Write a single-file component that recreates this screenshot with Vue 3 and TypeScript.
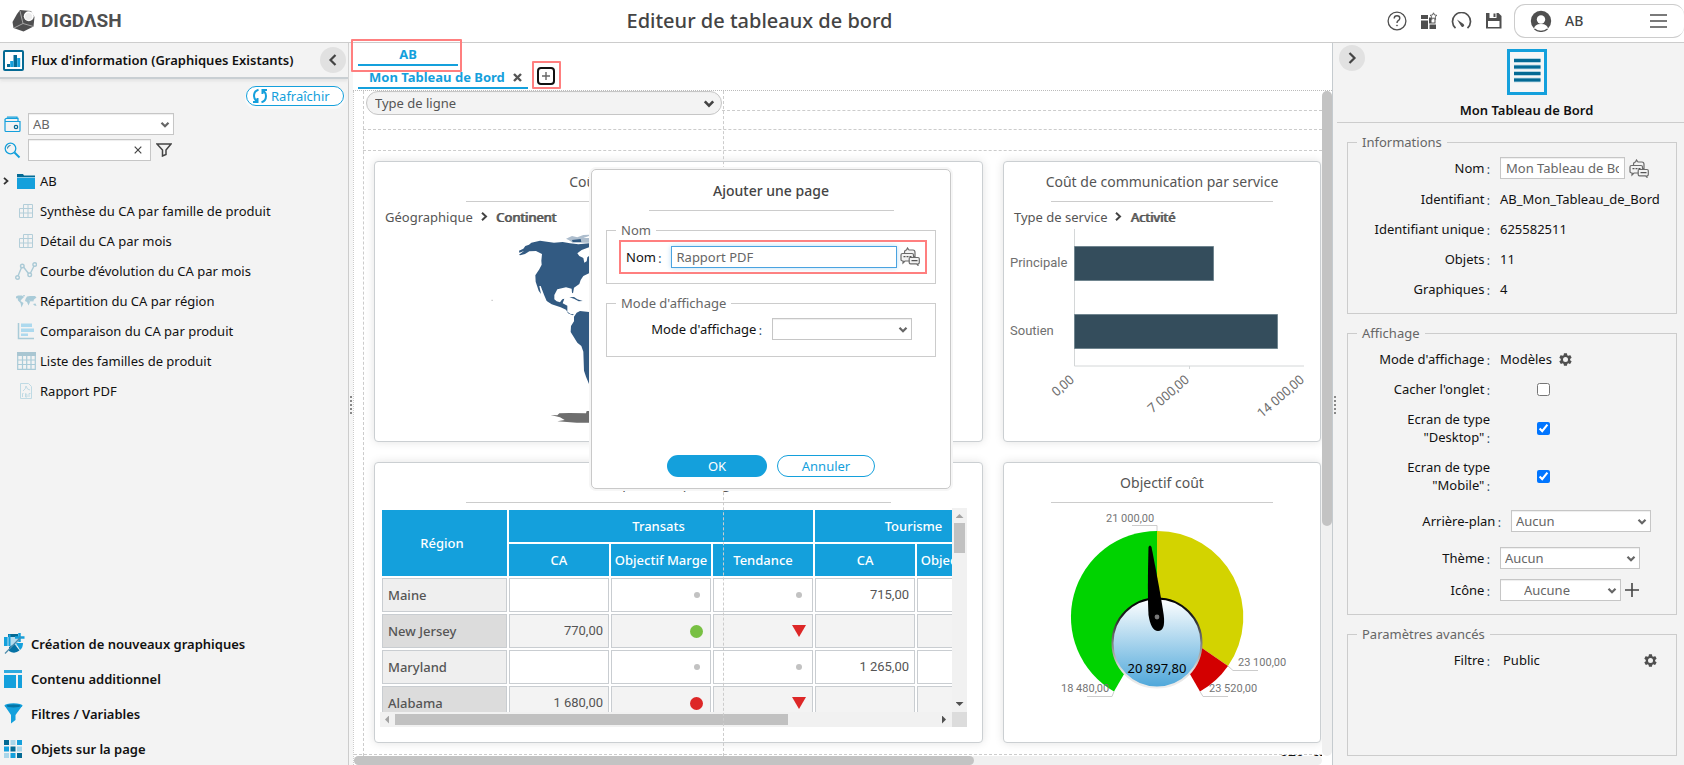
<script setup lang="ts">
import { ref } from 'vue'

interface FluxItem { label: string; icon: string }
interface Cell { kind: 'text' | 'none' | 'dot' | 'green' | 'red' | 'down'; value?: string }
interface Row { region: string; cells: Cell[] }

const fluxItems: FluxItem[] = [
  { label: 'Synthèse du CA par famille de produit', icon: 'cross' },
  { label: 'Détail du CA par mois', icon: 'cross' },
  { label: 'Courbe d’évolution du CA par mois', icon: 'line' },
  { label: 'Répartition du CA par région', icon: 'map' },
  { label: 'Comparaison du CA par produit', icon: 'bars' },
  { label: 'Liste des familles de produit', icon: 'table' },
  { label: 'Rapport PDF', icon: 'pdf' },
]

const sections = [
  { label: 'Création de nouveaux graphiques', icon: 'create' },
  { label: 'Contenu additionnel', icon: 'content' },
  { label: 'Filtres / Variables', icon: 'filter' },
  { label: 'Objets sur la page', icon: 'objects' },
]

const none: Cell = { kind: 'none' }
const dot: Cell = { kind: 'dot' }
const down: Cell = { kind: 'down' }
const num = (value: string): Cell => ({ kind: 'text', value })
const rows: Row[] = [
  { region: 'Maine', cells: [none, dot, dot, num('715,00'), none] },
  { region: 'New Jersey', cells: [num('770,00'), { kind: 'green' }, down, none, none] },
  { region: 'Maryland', cells: [none, dot, dot, num('1 265,00'), none] },
  { region: 'Alabama', cells: [num('1 680,00'), { kind: 'red' }, down, none, none] },
]

const infos = [
  { label: 'Identifiant', value: 'AB_Mon_Tableau_de_Bord' },
  { label: 'Identifiant unique', value: '625582511' },
  { label: 'Objets', value: '11' },
  { label: 'Graphiques', value: '4' },
]

const pageName = ref('Rapport PDF')
const boardName = ref('Mon Tableau de Bord')
const search = ref('')
const hidden = ref(false)
const desktop = ref(true)
const mobile = ref(true)
</script>

<template>
  <div class="app">
    <svg class="defs" aria-hidden="true">
      <symbol id="gear" viewBox="0 0 24 24">
        <path fill="currentColor" d="M19.4 13a7.6 7.6 0 0 0 0-2l2.200-1.700a.5.5 0 0 0 .1-.6l-2-3.500a.5.500 0 0 0-.6-.2l-2.600 1a7.300 7.300 0 0 0-1.700-1l-.4-2.600a.5.500 0 0 0-.5-.4h-4a.5.500 0 0 0-.5.4L9 5a7.300 7.300 0 0 0-1.700 1l-2.500-1a.5.500 0 0 0-.6.200l-2 3.500a.5.500 0 0 0 .1.600L4.500 11a7.600 7.600 0 0 0 0 2l-2.200 1.700a.5.500 0 0 0-.1.600l2 3.500c.1.200.4.300.6.200l2.500-1c.5.400 1.100.8 1.700 1l.4 2.600c0 .2.300.4.500.4h4c.3 0 .5-.2.500-.4l.4-2.600a7.300 7.300 0 0 0 1.700-1l2.600 1c.2.100.5 0 .6-.2l2-3.500a.5.500 0 0 0-.1-.6zM12 16a4 4 0 1 1 0-8 4 4 0 0 1 0 8z" />
      </symbol>
      <symbol id="chevron" viewBox="0 0 10 8">
        <path d="M1.500 1.800 5 5.300 8.500 1.800" fill="none" stroke="currentColor" stroke-width="2.200" />
      </symbol>
      <symbol id="translate" viewBox="0 0 20 19">
        <g fill="#f3f3f3" stroke="#6b6b6b" stroke-width="1.200">
          <path d="M4.500 5.500q0-2.500 2-2.500L7.500 1l1.500 2h4q2 0 2 2.500v4h-10z" />
          <path d="M2.500 6.500h9.500q1.500 0 1.500 1.500v4.500q0 1.500-1.500 1.500H5L3 16v-2q-2 0-2-1.500V8q0-1.500 1.500-1.500z" />
          <path d="M10 10.500h8q1.300 0 1.300 1.300v3.700q0 1.300-1.300 1.300v1.500l-1.500-1.500H10.500q-1.300 0-1.300-1.300v-3.700q0-1.300.8-1.300z" />
        </g>
        <path d="M3.500 9.700h2m1 0h2m1 0h2M11.500 13.700h6" stroke="#555" stroke-width="1.300" />
      </symbol>
    </svg>

    <header class="topbar">
      <a class="logo" href="#" aria-label="DIGDASH">
        <svg width="23" height="23" viewBox="0 0 23 23">
          <path d="M8 1 19 2 22.500 8 21.500 17.500 11.500 22.500 1.500 19 .5 13 5 5z" fill="#4f4f50" />
          <path d="M11 14.500 2 19M11 14.500 21.500 17.500M11 14.500 8 2" stroke="#b9b9b9" stroke-width=".8" fill="none" />
          <circle cx="16.800" cy="7.300" r="5" fill="#fff" />
          <circle cx="16.500" cy="7.500" r="3.600" fill="#ececec" />
        </svg>
        <span>DIGDΛSH</span>
      </a>
      <h1>Editeur de tableaux de bord</h1>
      <nav class="tools">
        <button aria-label="Aide">
          <svg width="20" height="20" viewBox="0 0 20 20" fill="none" stroke="#4f4f4f">
            <circle cx="10" cy="10" r="8.900" stroke-width="1.300" />
            <path d="M7.200 7.500q0-2.700 2.800-2.700t2.800 2.500q0 1.500-1.600 2.400-1.200.8-1.200 2.300" stroke-width="1.400" />
            <circle cx="10" cy="14.500" r=".6" fill="#4f4f4f" stroke-width=".6" />
          </svg>
        </button>
        <button aria-label="Tableaux">
          <svg width="18" height="18" viewBox="0 0 18 18" fill="#4f4f4f">
            <path d="M1 3h7v4H1zM1 8.500h7V17H1zM9.500 12.500H16V17H9.500zM9.500 6h2v5h-2z" />
            <rect x="9.500" y="6" width="5.500" height="5" fill="none" stroke="#4f4f4f" />
            <path d="m13.500.8 1 2.200 2.400.3-1.800 1.700.5 2.400-2.100-1.200-2.100 1.200.5-2.400L10.100 3.300l2.400-.3z" fill="#fff" stroke="#4f4f4f" stroke-width=".9" />
          </svg>
        </button>
        <button aria-label="Performances">
          <svg width="21" height="18" viewBox="0 0 21 18" fill="none" stroke="#4f4f4f">
            <path d="M4.500 16.200A9 9 0 1 1 16.500 16.200" stroke-width="1.700" />
            <path d="m6 7.500 6.500 4.500a1.600 1.600 0 1 1-2.400 2z" fill="#4f4f4f" stroke="none" />
          </svg>
        </button>
        <button aria-label="Enregistrer">
          <svg width="17" height="17" viewBox="0 0 17 17">
            <path d="M1 1h12.500L16.500 4v12.500H1z" fill="#4f4f4f" />
            <path d="M4.500 1h7v5h-7zM3 9h11.500v6H3z" fill="#fff" />
            <path d="M8.500 1.500h2V5h-2z" fill="#4f4f4f" />
          </svg>
        </button>
      </nav>
      <div class="user">
        <svg width="22" height="22" viewBox="0 0 22 22">
          <circle cx="11" cy="11" r="10.200" fill="#4f4f4f" />
          <circle cx="11" cy="9.500" r="4.200" fill="#fff" />
          <path d="M4 19.500q0-5.500 7-5.500t7 5.500q-7 3-14 0z" fill="#fff" />
          <path d="M4.500 19a10.200 10.200 0 0 0 13 0" fill="none" stroke="#4f4f4f" stroke-width="1.400" />
        </svg>
        <span>AB</span>
        <button aria-label="Menu">
          <svg width="17" height="14" viewBox="0 0 17 14" stroke="#4f4f4f" stroke-width="1.500"><path d="M0 1h17M0 7h17M0 13h17" /></svg>
        </button>
      </div>
    </header>

    <main class="body">
      <aside class="left">
        <div class="panel-head">
          <svg width="21" height="21" viewBox="0 0 21 21">
            <rect x="1" y="1" width="19" height="19" rx="1" fill="#fff" stroke="#046a94" stroke-width="2" />
            <path d="M4 14h3v3H4zM10.500 5h3.500v12h-3.500z" fill="#046a94" />
            <path d="M7.200 11h3.300v6H7.200zM14.200 8h3v9h-3z" fill="#14a0dc" />
          </svg>
          <h2>Flux d'information (Graphiques Existants)</h2>
          <button class="round" aria-label="Réduire">
            <svg width="12" height="14" viewBox="0 0 12 14"><path d="M8.500 2 3.500 7l5 5" fill="none" stroke="#444" stroke-width="2.200" /></svg>
          </button>
        </div>

        <div class="refresh-row">
          <button class="refresh">
            <svg width="16" height="16" viewBox="0 0 16 16" fill="none" stroke="#14a0dc" stroke-width="2">
              <path d="M6.500 1.800Q2 3 2 8q0 3 2.500 5.300M1 14h4.500V10M9.500 14.200Q14 13 14 8q0-3-2.500-5.300M15 2h-4.500v4" />
            </svg>
            <span>Rafraîchir</span>
          </button>
        </div>

        <div class="tool-row">
          <svg width="17" height="17" viewBox="0 0 17 17" fill="none" stroke="#14a0dc" stroke-width="1.200">
            <path d="M1 3v11.500q0 1 1 1h13q1 0 1-1V5.500H2.500Q1 5.500 1 4t1.500-1.700H14V5M3 1h10v1.500" />
            <circle cx="12" cy="11" r="1.700" stroke="#046a94" />
          </svg>
          <label class="select wallet">
            <select aria-label="Portefeuille"><option>AB</option></select>
            <svg width="10" height="8"><use href="#chevron" /></svg>
          </label>
        </div>
        <div class="tool-row">
          <svg width="17" height="17" viewBox="0 0 17 17" fill="none" stroke="#14a0dc">
            <circle cx="6.500" cy="6.500" r="5.300" stroke-width="1.300" />
            <path d="M3.500 6.500q0-3 3-3" stroke="#046a94" />
            <path d="m10.500 10.500 5 5" stroke-width="1.900" />
          </svg>
          <div class="search">
            <input v-model="search" type="text" aria-label="Rechercher" />
            <button aria-label="Effacer">
              <svg width="8" height="8" viewBox="0 0 8 8"><path d="m.7.7 6.600 6.600M7.300.7.7 7.300" stroke="#444" stroke-width="1.200" /></svg>
            </button>
          </div>
          <button aria-label="Filtrer" class="funnel">
            <svg width="16" height="14" viewBox="0 0 16 14"><path d="M1 1h14L10 7v4.500L6.500 13V7z" fill="none" stroke="#444" stroke-width="1.500" /></svg>
          </button>
        </div>

        <ul class="tree">
          <li class="folder">
            <svg class="arrow" width="6" height="8" viewBox="0 0 6 8"><path d="m1 .8 3.500 3.200L1 7.200" fill="none" stroke="#333" stroke-width="1.800" /></svg>
            <svg class="ico" width="18" height="15" viewBox="0 0 18 15"><path d="M0 0h6l1 1.500h11V4H0z" fill="#046a94" /><path d="M0 4h18v11H0z" fill="#14a0dc" /><path d="M0 3.500h18" stroke="#8fcbe6" /></svg>
            <span>AB</span>
          </li>
          <li v-for="item in fluxItems" :key="item.label">
            <svg v-if="item.icon === 'cross'" class="ico" width="16" height="16" viewBox="0 0 16 16" fill="none" stroke="#b3ced9"><path d="M5.500 1.500h9v13h-13v-9h13M1.500 10h13M5.500 1.500v13M10 1.500v13" /></svg>
            <svg v-else-if="item.icon === 'line'" class="ico" width="22" height="18" viewBox="0 0 22 18" fill="none" stroke="#abcad6" stroke-width="1.400"><path d="M3 14 6.500 5.500M8.500 5 13.500 11.500M15.500 11 19 4" /><circle cx="2.500" cy="15.500" r="1.800" /><circle cx="7.300" cy="4" r="1.800" /><circle cx="14.700" cy="12.800" r="1.800" /><circle cx="19.700" cy="2.500" r="1.800" /></svg>
            <svg v-else-if="item.icon === 'map'" class="ico" width="21" height="13" viewBox="0 0 21 13" fill="#a9cbd8"><path d="M0 1.500 2 .5h4L8 2 5.500 4.500 4.500 6l3 2-2 4.500L4.500 8 2 5.500 1.500 3 0 3.500zM7 0h2L8 2zM9.500 4 11 1.500 14 1h5l1.500 1.500L18 4.500 17 7l-1-1.500-1 1.500-1.500-2L14 7l-1.500 3.500L11 7 9 6zM17 9l2.500-.5L20.500 11l-2-.5z" /></svg>
            <svg v-else-if="item.icon === 'bars'" class="ico" width="18" height="17" viewBox="0 0 18 17"><path d="M1.500 0v15.500H17" fill="none" stroke="#a9cbd8" stroke-width="1.500" /><path d="M4 .5h11V4H4zM4 5.500h13V9H4zM4 10.500h7V13H4z" fill="#add9ee" /></svg>
            <svg v-else-if="item.icon === 'table'" class="ico" width="19" height="18" viewBox="0 0 19 18"><path d="M.7 4v13.300h17.600V4M.7 8h17.600M.7 12.500h17.600M5.500 4v13M9.700 4v13M14 4v13" fill="none" stroke="#a9cbd8" stroke-width="1.200" /><path d="M0 0h19v4H0z" fill="#a9c6d2" /></svg>
            <svg v-else class="ico" width="12" height="16" viewBox="0 0 12 16" fill="none" stroke="#bfdae4"><path d="M.5.5h8l3 3v12H.5zM3 8q3-2 3-5 1 4 4 4M2.500 14v-3.500h1M5.500 14v-3.500q2 0 1.500 3.500zM9 14v-3.500h1.500" /></svg>
            <span>{{ item.label }}</span>
          </li>
        </ul>

        <ul class="sections">
          <li v-for="s in sections" :key="s.label">
            <span class="sec-ico">
              <svg v-if="s.icon === 'create'" width="21" height="21" viewBox="0 0 21 21"><path d="M4 1h10v4H4z" fill="#046a94" /><path d="M0 4h14v9H0z" fill="#b5dcee" /><path d="M0 4h3.500v9H0zM4.500 1.500h2V13h-2z" fill="#14a0dc" /><path d="M5 14 10.500 11l5 6.500q-5 4-10.500.5z" fill="#0572a5" /><path d="M12 10h7q0 5-3 7z" fill="#14a0dc" /><path d="M15.500 0v9M11 4.500h9.500" stroke="#14a0dc" stroke-width="2.500" /><path d="M1 20.500 17 4" stroke="#4d8bab" stroke-width="1.200" /></svg>
              <svg v-else-if="s.icon === 'content'" width="18" height="18" viewBox="0 0 18 18"><path d="M0 0h18v3H0z" fill="#2eaadf" /><path d="M0 5h12v13H0zM14 5h4v13h-4z" fill="#14a0dc" /></svg>
              <svg v-else-if="s.icon === 'filter'" width="19" height="21" viewBox="0 0 19 21"><path d="M.5 2.500 7 12v8.500l4.500-3.500v-5l7-9.500z" fill="#14a0dc" /><ellipse cx="9.500" cy="2.700" rx="9" ry="2.500" fill="#14a0dc" /><ellipse cx="9.500" cy="2.900" rx="7" ry="1.500" fill="#0574a5" /></svg>
              <svg v-else width="18" height="18" viewBox="0 0 18 18"><path d="M0 0h5v5H0zM6.500 6.500h5v5h-5zM13 13h5v5h-5z" fill="#046a94" /><path d="M13 0h5v5h-5zM0 6.500h5v5H0zM6.500 13h5v5h-5z" fill="#14a0dc" /><path d="M6.500 0h5v5h-5zM13 6.500h5v5h-5zM0 13h5v5H0z" fill="#a9d6ea" /></svg>
            </span>
            <span>{{ s.label }}</span>
          </li>
        </ul>
      </aside>
      <div class="splitter"><i /><i /><i /><i /><i /></div>

      <section class="center">
        <div class="tabs first">
          <button class="tab main">AB</button>
          <span class="mark mark-tab" />
        </div>
        <div class="tabs second">
          <div class="tab page">
            <button>Mon Tableau de Bord</button>
            <button aria-label="Fermer" class="close"><svg width="9" height="9" viewBox="0 0 9 9"><path d="m1 1 7 7M8 1 1 8" stroke="#555" stroke-width="2.400" /></svg></button>
          </div>
          <button class="add" aria-label="Ajouter une page"><svg width="8" height="8" viewBox="0 0 8 8"><path d="M4 0v8M0 4h8" stroke="#666" stroke-width="1.400" /></svg><span class="mark mark-add" /></button>
        </div>

        <div class="viewport">
          <div class="canvas">
            <label class="select type">
              <select aria-label="Type de ligne"><option>Type de ligne</option></select>
              <svg width="12" height="10"><use href="#chevron" /></svg>
            </label>
            <div class="cards">
              <article class="card">
                <h3>Coût de communication par zone</h3>
                <p class="crumb">Géographique <svg width="7" height="9" viewBox="0 0 7 9"><path d="m1 .8 4 3.700-4 3.700" fill="none" stroke="#444" stroke-width="2" /></svg> <b>Continent</b></p>
                <svg class="chart" viewBox="15 27 1821 630">
                  <g fill="#325a82">
                    <path d="M447 92 460 86 466 78 477 74 484 68 510 62 552 68 578 66 600 70 625 73 657 70V82L635 90 622 100 628 108 640 114 643 128 650 124 652 112 657 108V160L640 168 632 180 628 192 612 203 609 220 606 218 605 206 588 202 562 208 553 225 553 238 560 244 570 247 577 238 583 236 578 250 592 257 592 275 602 282 612 283 608 286 594 280 588 269 572 262 545 253 530 243 522 224 512 198 508 198 513 222 506 212 497 185 496 166 508 148 515 134 514 122 516 102 498 93 478 94 465 102 450 106 447 104 462 93 448 98z" />
                    <path d="M612 290 620 278 630 273 657 276V492L648 470 642 452 640 395 634 378 622 368 602 336 603 318 612 304z" />
                    <path d="M588 56 606 48 622 52 640 45 657 44V48L640 54 657 54V68L608 68 596 60z" opacity=".4" />
                    <path d="M606 60 632 57 634 66 608 66zM598 232 612 231 622 238 638 243 626 244 612 236z" />
                  </g>
                  <path d="M542 585 562 586 568 580 598 579 648 580 650 573H657V608H620L562 604 584 600 570 592z" fill="#6e6e6e" />
                  <path d="M364 241h5" stroke="#aaa" stroke-width="2" />
                </svg>
              </article>

              <article class="card">
                <h3>Coût de communication par service</h3>
                <p class="crumb">Type de service <svg width="7" height="9" viewBox="0 0 7 9"><path d="m1 .8 4 3.700-4 3.700" fill="none" stroke="#444" stroke-width="2" /></svg> <b>Activité</b></p>
                <svg class="chart roboto" viewBox="0 0 316 210">
                  <path d="M70.500 0v137H300M185.500 137v3" fill="none" stroke="#d4d7d8" />
                  <g fill="#344d5c" stroke="#70858f"><path d="M70.500 17.500h139v34h-139zM70.500 85.500h203v34h-203z" /></g>
                  <g font-size="13" fill="#707070">
                    <text x="6" y="38">Principale</text>
                    <text x="6" y="106">Soutien</text>
                    <g text-anchor="end">
                      <text transform="translate(71 152) rotate(-41)">0,00</text>
                      <text transform="translate(186 152) rotate(-41)">7 000,00</text>
                      <text transform="translate(301 152) rotate(-41)">14 000,00</text>
                    </g>
                  </g>
                </svg>
              </article>

              <article class="card">
                <h3>Répartition par région</h3>
                <div class="grid-box">
                  <div class="grid-clip">
                    <table>
                      <colgroup><col class="c-region" /><col v-for="n in 5" :key="n" class="c-num" /></colgroup>
                      <thead>
                        <tr class="groups"><th rowspan="2">Région</th><th colspan="3">Transats</th><th colspan="2">Tourisme</th></tr>
                        <tr><th>CA</th><th>Objectif Marge</th><th>Tendance</th><th>CA</th><th>Objectif Marge</th></tr>
                      </thead>
                      <tbody>
                        <tr v-for="row in rows" :key="row.region">
                          <th scope="row">{{ row.region }}</th>
                          <td v-for="(cell, i) in row.cells" :key="i">
                            <template v-if="cell.kind === 'text'">{{ cell.value }}</template>
                            <i v-else-if="cell.kind !== 'none'" :class="cell.kind" />
                          </td>
                        </tr>
                      </tbody>
                    </table>
                  </div>
                  <div class="vbar"><i class="tri up" /><span /><i class="tri dn" /></div>
                  <div class="hbar"><i class="tri lt" /><span /><i class="tri rt" /></div>
                  <div class="corner" />
                </div>
              </article>

              <article class="card">
                <h3>Objectif coût</h3>
                <svg class="chart roboto" viewBox="0 0 316 236">
                  <defs>
                    <linearGradient id="dial" x1="0" y1="0" x2="0" y2="1"><stop offset="0" stop-color="#fff" /><stop offset="1" stop-color="#4ea7da" /></linearGradient>
                    <linearGradient id="ring" x1="0" y1="0" x2="0" y2="1"><stop offset="0" stop-color="#000" /><stop offset=".2" stop-color="#222" /><stop offset=".8" stop-color="#ddd" /><stop offset="1" stop-color="#eee" /></linearGradient>
                  </defs>
                  <path d="M153 114 110 188.500A86 86 0 0 1 153 28z" fill="#00d300" />
                  <path d="M153 114V28A86 86 0 0 1 224 163z" fill="#d3d300" />
                  <path d="M153 114 224 163A86 86 0 0 1 196 188.500z" fill="#d30000" />
                  <circle cx="153" cy="140" r="44.500" fill="url(#dial)" stroke="url(#ring)" stroke-width="2" />
                  <path d="M144.500 44q1.500-3 3 0 9 46 12.200 68 2 16-5.700 16-7 0-9.500-16-1.200-22 0-68z" fill="#000" />
                  <circle cx="153" cy="114" r="2.400" fill="#777" />
                  <path d="M128 22.500h25V28M224 163l5 4.500h25M110 188.500l-2 5H83M196 188.500l3 5h25" fill="none" stroke="#ccc" />
                  <g font-size="11" fill="#757575">
                    <text x="102" y="19">21 000,00</text>
                    <text x="234" y="163">23 100,00</text>
                    <text x="57" y="189">18 480,00</text>
                    <text x="205" y="189">23 520,00</text>
                  </g>
                  <text class="noto" x="153" y="170" text-anchor="middle" font-size="13">20 897,80</text>
                </svg>
              </article>
            </div>
            <i class="guide h1" /><i class="guide h2" /><i class="guide h3" /><i class="guide h4" />
            <i class="guide v1" /><i class="guide v2" />
            <span class="dims">979x675</span>
          </div>
          <div class="vscroll"><span /></div>
          <div class="hscroll"><span /></div>
        </div>

        <form class="dialog" role="dialog" aria-label="Ajouter une page" @submit.prevent>
          <h2>Ajouter une page</h2>
          <fieldset>
            <legend>Nom</legend>
            <div class="name-row">
              <label for="page-name">Nom <em>:</em></label>
              <input id="page-name" v-model="pageName" type="text" />
              <button type="button" aria-label="Traduire"><svg width="20" height="19"><use href="#translate" /></svg></button>
            </div>
          </fieldset>
          <fieldset>
            <legend>Mode d'affichage</legend>
            <div class="mode-row">
              <label for="page-mode">Mode d'affichage <em>:</em></label>
              <div class="select"><select id="page-mode"><option></option></select><svg width="10" height="8"><use href="#chevron" /></svg></div>
            </div>
          </fieldset>
          <div class="actions">
            <button type="submit" class="ok">OK</button>
            <button type="button" class="cancel">Annuler</button>
          </div>
        </form>
      </section>

      <aside class="right">
        <div class="splitter"><i /><i /><i /><i /><i /></div>
        <div class="props">
          <div class="props-head">
            <button class="round" aria-label="Réduire"><svg width="12" height="14" viewBox="0 0 12 14"><path d="m3.500 2 5 5-5 5" fill="none" stroke="#444" stroke-width="2.200" /></svg></button>
            <svg width="40" height="46" viewBox="0 0 40 46"><rect x="1.500" y="1.500" width="37" height="43" fill="#f6f6f6" stroke="#14a0dc" stroke-width="3" /><path d="M7 11.500h26.500M7 18h26.500M7 24.500h26.500M7 31h26.500" stroke="#9cc9dc" stroke-width="4.400" /><path d="M7 11.500h26.500M7 18h26.500M7 24.500h26.500M7 31h26.500" stroke="#046a94" stroke-width="3" /></svg>
            <h2>Mon Tableau de Bord</h2>
          </div>
          <fieldset class="info">
            <legend>Informations</legend>
            <div class="row">
              <label for="board-name">Nom <em>:</em></label>
              <div class="val"><input id="board-name" v-model="boardName" type="text" /><button aria-label="Traduire"><svg width="20" height="19"><use href="#translate" /></svg></button></div>
            </div>
            <div v-for="i in infos" :key="i.label" class="row short">
              <span class="lab">{{ i.label }} <em>:</em></span><span class="val">{{ i.value }}</span>
            </div>
          </fieldset>
          <fieldset class="display">
            <legend>Affichage</legend>
            <div class="row short"><span class="lab">Mode d'affichage <em>:</em></span><span class="val mode">Modèles <button aria-label="Configurer"><svg width="15" height="15"><use href="#gear" /></svg></button></span></div>
            <div class="row short"><label for="c1">Cacher l'onglet <em>:</em></label><div class="val tick"><input id="c1" v-model="hidden" type="checkbox" /></div></div>
            <div class="row tall"><label for="c2">Ecran de type<br />"Desktop" <em>:</em></label><div class="val tick"><input id="c2" v-model="desktop" type="checkbox" /></div></div>
            <div class="row tall"><label for="c3">Ecran de type<br />"Mobile" <em>:</em></label><div class="val tick"><input id="c3" v-model="mobile" type="checkbox" /></div></div>
            <div class="row bg"><label for="s1">Arrière-plan <em>:</em></label><div class="select"><select id="s1"><option>Aucun</option></select><svg width="10" height="8"><use href="#chevron" /></svg></div></div>
            <div class="row"><label for="s2">Thème <em>:</em></label><div class="select"><select id="s2"><option>Aucun</option></select><svg width="10" height="8"><use href="#chevron" /></svg></div></div>
            <div class="row"><label for="s3">Icône <em>:</em></label><div class="val"><div class="select icon-select"><select id="s3"><option>Aucune</option></select><svg width="10" height="8"><use href="#chevron" /></svg></div><button aria-label="Ajouter"><svg width="14" height="14" viewBox="0 0 14 14"><path d="M7 0v14M0 7h14" stroke="#444" stroke-width="1.600" /></svg></button></div></div>
          </fieldset>
          <fieldset class="advanced">
            <legend>Paramètres avancés</legend>
            <div class="row"><span class="lab">Filtre <em>:</em></span><span class="val">Public<button class="far" aria-label="Configurer"><svg width="15" height="15"><use href="#gear" /></svg></button></span></div>
          </fieldset>
        </div>
      </aside>
    </main>
  </div>
</template>

<style>
body { margin: 0; }
</style>

<style scoped>
* { box-sizing: border-box; }
.app { height: 100vh; min-height: 600px; display: flex; flex-direction: column; overflow: hidden; font: 13px/18px "Noto Sans", "Open Sans", sans-serif; color: #111; background: #fff; }
.defs { position: absolute; width: 0; height: 0; }
svg { display: block; flex: none; }
button { border: 0; padding: 0; margin: 0; background: none; font: inherit; color: inherit; cursor: pointer; }
h1, h2, h3, p, ul { margin: 0; padding: 0; }
ul { list-style: none; }
em { font-style: normal; font-size: 12px; color: #2d4a6b; display: inline-block; line-height: 14px; padding-top: 4px; margin-left: -1px; vertical-align: top; }

.topbar { height: 43px; flex: none; display: flex; align-items: center; padding-bottom: 1px; border-bottom: 1px solid #ccc; }
.logo { display: flex; align-items: center; gap: 6px; margin-left: 12px; width: 120px; text-decoration: none; color: #4f4f50; font: 700 19px/24px Roboto, sans-serif; }
.topbar h1 { flex: 1; text-align: center; font-size: 20px; font-weight: 500; line-height: 26px; color: #444; }
.tools { display: flex; gap: 12px; align-items: center; margin-right: 11px; }
.tools button { width: 20px; display: flex; justify-content: center; }
.user { width: 170px; height: 34px; display: flex; align-items: center; border: 1px solid #ccc; border-right: 0; border-radius: 11px; padding: 0 17px 0 15px; font-size: 14px; font-weight: 500; color: #444; }
.user span { margin-left: 13px; }
.user button { margin-left: auto; }

.body { flex: 1; min-height: 0; display: flex; }
.left { width: 349px; flex: none; background: #f3f3f3; border-right: 1px solid #ccc; display: flex; flex-direction: column; }
.panel-head { height: 36px; flex: none; display: flex; align-items: center; padding: 0 2px 0 3px; border-bottom: 2px solid #c9cfd3; box-shadow: 0 2px 3px #e3e3e3; }
.panel-head h2 { font-size: 13px; font-weight: 600; margin-left: 7px; flex: 1; white-space: nowrap; }
.round { width: 26px; height: 26px; border-radius: 50%; background: #e1e1e1; display: flex; align-items: center; justify-content: center; flex: none; }
.refresh-row { display: flex; justify-content: flex-end; padding: 7px 4px; }
.refresh { width: 98px; height: 20px; border: 1px solid #14a0dc; border-radius: 10px; background: #fff; color: #14a0dc; display: flex; align-items: center; gap: 3px; padding-left: 5px; box-shadow: 0 2px 1px 1px #fafafa; }
.tool-row { display: flex; align-items: center; height: 22px; margin-bottom: 4px; padding-left: 4px; gap: 7px; }
.select { position: relative; display: block; width: 140px; height: 22px; }
.select select { appearance: none; width: 100%; height: 100%; border: 1px solid #c6c6c6; background: #fff; border-radius: 0; font: inherit; color: #666; padding: 0 20px 0 4px; box-shadow: inset 0 1px 1px #eee; }
.select svg { position: absolute; right: 4px; top: 8px; color: #666; pointer-events: none; }
.wallet { width: 146px; }
.search { position: relative; width: 123px; height: 22px; }
input[type="text"] { height: 22px; border: 1px solid #c6c6c6; background: #fff; font: inherit; color: #666; padding: 0 5px; box-shadow: inset 0 1px 1px #eee; min-width: 0; outline: 0; }
.search input { width: 100%; }
.search button { position: absolute; right: 9px; top: 7px; }
.funnel { margin-left: -2px; }
.tree { margin-top: 1px; }
.tree li { height: 30px; display: grid; grid-template-columns: 12px 24px 1fr; column-gap: 2px; align-items: center; }
.tree .ico { grid-column: 2; justify-self: center; }
.tree .arrow { justify-self: center; }
.tree li span { grid-column: 3; white-space: nowrap; }
.sections { margin: auto 0 -1px; }
.sections li { height: 35px; display: flex; align-items: center; font-weight: 600; gap: 4px; padding-left: 2px; }
.sec-ico { width: 25px; padding-left: 2px; }

.splitter { width: 4px; flex: none; background: #f6f6f6; display: flex; flex-direction: column; justify-content: center; align-items: flex-end; gap: 2px; padding: 2px 1px 0 0; }
.splitter i { width: 2px; height: 2px; background: #888; }

.center { flex: 1; min-width: 0; position: relative; display: flex; flex-direction: column; }
.tabs { display: flex; padding-left: 5px; flex: none; font-weight: 700; color: #14a0dc; position: relative; }
.first { height: 23px; }
.second { height: 25px; align-items: flex-end; padding-bottom: 1px; border-bottom: 1px dotted #bbb; }
.main { width: 100px; border-bottom: 2px solid #14a0dc; }
.page { width: 170px; height: 22px; display: flex; align-items: center; gap: 8px; padding-left: 11px; border-bottom: 2px solid #14a0dc; }
.add { position: relative; width: 18px; height: 18px; margin: 0 0 4px 9px; border: 2px solid #111; border-radius: 4px; display: flex; align-items: center; justify-content: center; }
.mark { position: absolute; border: 2px solid #ff7f7f; border-radius: 1px; pointer-events: none; }
.mark-tab { left: -2px; top: -4px; width: 111px; height: 33px; }
.mark-add { inset: -8px -8px -6px -7px; }

.viewport { flex: 1; min-height: 0; display: grid; grid-template-columns: minmax(0, 1fr) 10px; grid-template-rows: minmax(0, 1fr) 9px; border-left: 1px dotted #ccc; }
.canvas { position: relative; overflow: hidden; padding: 0 1px 13px 20px; display: flex; flex-direction: column; background: #fff; }
.type { width: 356px; height: 24px; margin: 0 0 46px -8px; flex: none; }
.type select { border-radius: 12px; background: #f3f3f3; color: #555; padding-left: 8px; }
.type svg { right: 7px; color: #444; }
.cards { flex: 1; min-height: 0; display: grid; grid-template-columns: 609fr 318fr; grid-template-rows: repeat(2, minmax(0, 1fr)); gap: 20px; }
.card { min-width: 0; overflow: hidden; border: 1px solid #cbcfd2; border-radius: 4px; background: #fff; box-shadow: 0 0 10px #e2e2e2; }
.card h3 { display: flex; justify-content: center; width: 70%; height: 40px; margin: 0 auto; border-bottom: 1px solid #ccc; font-size: 14px; font-weight: 400; line-height: 40px; color: #555; white-space: nowrap; }
.crumb { height: 27px; display: flex; align-items: center; gap: 8px; padding: 2px 0 0 10px; color: #555; }
.crumb b { font-weight: 400; color: #555; text-shadow: 1px 0 0 #555; }
.chart { width: 100%; height: auto; }
.roboto { font-family: Roboto, sans-serif; }
.noto { font-family: "Noto Sans", sans-serif; }

.grid-box { margin: 5px 15px 0 5px; height: 219px; display: grid; grid-template-columns: minmax(0, 1fr) 15px; grid-template-rows: minmax(0, 1fr) 15px; }
.grid-clip { overflow: hidden; }
table { table-layout: fixed; width: 637px; border-collapse: separate; border-spacing: 2px; color: #555; }
.c-region { width: 125px; }
.c-num { width: 100px; }
thead th { height: 32px; padding: 0; background: #14a0dc; color: #fff; font-weight: 500; white-space: nowrap; }
thead .groups th { padding-right: 5px; }
tbody th { height: 34px; padding: 0 5px; border: 1px solid #c9cdd1; background: #efefef; text-align: left; font-weight: 500; }
tbody td { height: 34px; padding: 0 5px; border: 1px solid #c9cdd1; text-align: right; font-family: Roboto, sans-serif; }
tbody tr:nth-child(even) th { background: #dcdcdc; }
tbody tr:nth-child(even) td { background: #f3f3f3; }
td i { display: block; margin-left: auto; }
.dot { width: 6px; height: 6px; border-radius: 50%; background: #c2c2c2; margin-right: 5px; }
.green, .red { width: 13px; height: 13px; border-radius: 50%; background: #78c043; margin-right: 2px; }
.red { background: #dd2727; }
.down { width: 14px; height: 12px; background: #dd2727; clip-path: polygon(0 0, 100% 0, 50% 100%); margin-right: 1px; }
.vbar, .hbar { background: #f1f1f1; display: flex; align-items: center; }
.vbar { flex-direction: column; padding: 6px 0; }
.vbar span { width: 11px; height: 30px; margin-top: 5px; background: #c1c1c1; }
.hbar { padding: 0 6px 0 5px; }
.hbar span { height: 11px; width: 70%; margin-left: 6px; background: #c1c1c1; }
.corner { background: #dcdcdc; }
.tri { background: #a3a3a3; }
.up { width: 8px; height: 4px; clip-path: polygon(50% 0, 100% 100%, 0 100%); }
.dn { width: 8px; height: 4px; margin-top: auto; background: #505050; clip-path: polygon(0 0, 100% 0, 50% 100%); }
.lt { width: 4px; height: 8px; clip-path: polygon(100% 0, 100% 100%, 0 50%); }
.rt { width: 4px; height: 8px; margin-left: auto; background: #505050; clip-path: polygon(0 0, 100% 50%, 0 100%); }

.guide { position: absolute; pointer-events: none; }
.h1, .h2, .h3, .h4 { left: 9px; right: 0; border-top: 1px dashed #ccc; }
.h1 { top: 19px; left: 368px; }
.h2 { top: 38px; }
.h3 { top: 59px; }
.h4 { bottom: 1px; left: 0; }
.v1, .v2 { top: 0; bottom: 0; border-left: 1px dashed #ccc; }
.v1 { left: 9px; }
.v2 { left: 369px; }
.dims { position: absolute; left: 926px; bottom: -13px; font-size: 14px; }
.vscroll, .hscroll { background: #f0f0f0; border-radius: 5px; }
.vscroll span { display: block; height: 435px; border-radius: 5px; background: #c3c3c3; }
.hscroll span { display: block; width: 64%; height: 9px; border-radius: 5px; background: #c3c3c3; }

.dialog { position: absolute; left: 238px; top: 126px; width: 360px; height: 320px; display: flex; flex-direction: column; padding: 0 14px 11px; border: 1px solid #c9c9c9; border-radius: 5px; background: #fff; box-shadow: 0 0 0 2px #f6f6f6; z-index: 3; }
.dialog h2 { width: 245px; height: 41px; margin: 0 auto 9px; border-bottom: 1px solid #ccc; text-align: center; font-size: 14px; font-weight: 500; line-height: 42px; color: #444; }
fieldset { margin: 0; padding: 0; border: 1px solid #ccc; min-width: 0; }
legend { margin-left: 9px; padding: 0 5px; line-height: 20px; color: #666; }
.dialog fieldset { height: 64px; margin-bottom: 9px; }
.name-row { display: flex; align-items: center; margin: 0 8px 0 12px; height: 34px; padding: 0 5px 1px 5px; border: 2px solid #ff7f7f; }
.name-row input { flex: 1; margin: 0 3px 0 9px; border-color: #4aa3e0; box-shadow: 0 0 5px #b9dcf5; }
.mode-row { display: flex; align-items: center; justify-content: flex-end; gap: 10px; padding: 5px 23px 0 0; }
.actions { margin-top: auto; display: flex; justify-content: center; gap: 10px; }
.actions button { width: 100px; height: 22px; border-radius: 11px; line-height: 20px; }
.ok { background: #14a0dc; color: #fff; }
.actions .cancel { width: 98px; border: 1px solid #14a0dc; color: #14a0dc; background: #fff; }

.right { width: 352px; flex: none; display: flex; background: #f3f3f3; border-left: 1px solid #c5cbcf; }
.right .splitter { background: none; }
.props { flex: 1; min-width: 0; display: flex; flex-direction: column; padding-bottom: 9px; }
.props-head { position: relative; height: 80px; flex: none; display: flex; flex-direction: column; align-items: center; padding: 6px 0 0 32px; border-bottom: 1px solid #ccc; }
.props-head .round { position: absolute; left: 2px; top: 2px; }
.props-head h2 { margin-top: 6px; font-size: 13px; font-weight: 600; }
.right fieldset { margin: 9px 7px 0 10px; flex: none; }
.right fieldset button { color: #4f4f4f; }
.info { padding-bottom: 9px; }
.display { padding: 1px 0 8px; }
.right .advanced { flex: 1; }
.row { display: grid; grid-template-columns: 142px 1fr; column-gap: 10px; align-items: center; height: 32px; }
.row label, .lab { text-align: right; }
.short { height: 30px; }
.tall { height: 48px; }
.bg { height: 42px; grid-template-columns: 153px 1fr; }
.val { display: flex; align-items: center; gap: 4px; }
.val input[type="text"] { width: 125px; }
.mode { gap: 6px; }
.tick { padding-left: 37px; }
.tick input { width: 13px; height: 13px; margin: 0; }
.icon-select { width: 121px; }
.icon-select select { padding-left: 23px; padding-right: 16px; }
.advanced .row { column-gap: 13px; }
.far { margin: 0 18px 0 auto; }
</style>
